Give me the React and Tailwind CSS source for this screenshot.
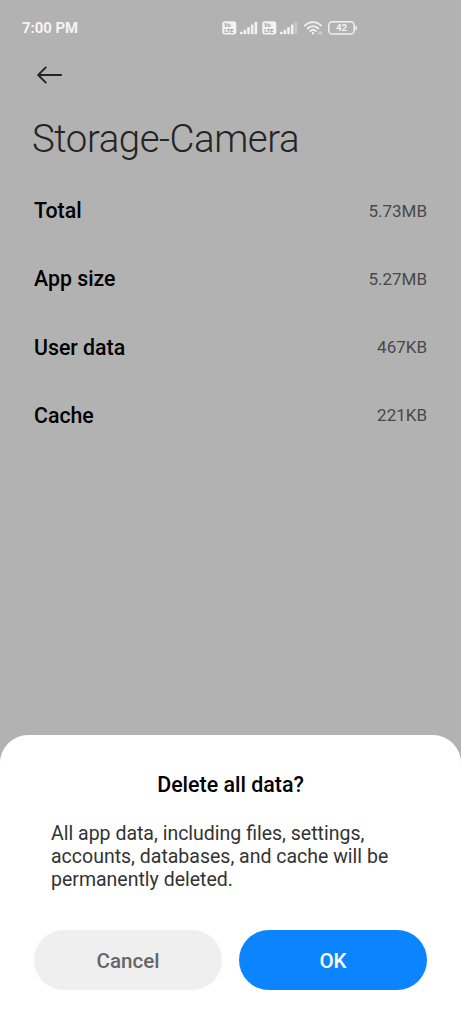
import React from 'react';

const rows = [
  { label: 'Total', value: '5.73MB' },
  { label: 'App size', value: '5.27MB' },
  { label: 'User data', value: '467KB' },
  { label: 'Cache', value: '221KB' },
];

const VolteBadge = () => (
  <svg width="15" height="14" viewBox="0 0 15 14" className="shrink-0">
    <rect x="0.3" y="0.3" width="14" height="13.2" rx="2.5" fill="#f2f2f2" />
    <text x="2" y="6" fontSize="5.6" fontWeight="700" fill="#9c9c9c">Vo</text>
    <text x="2.3" y="12.2" fontSize="5.6" fontWeight="700" fill="#9c9c9c">LTE</text>
  </svg>
);

const Signal = ({ weak }) => (
  <svg width="18" height="14" viewBox="0 0 18 14" className="shrink-0" fill="#f2f2f2">
    <rect x="0" y="10.8" width="2.6" height="2.4" rx="0.6" />
    <rect x="3.6" y="8.8" width="2.6" height="4.4" rx="0.6" />
    <rect x="7.2" y="6.2" width="2.6" height="7" rx="0.6" />
    <rect x="10.9" y="3.4" width="2.6" height="9.8" rx="0.6" />
    <rect x="14.6" y="0.7" width="2.6" height="12.5" rx="0.6" opacity={weak ? 0.35 : 1} />
  </svg>
);

const Wifi = () => (
  <svg width="19" height="14" viewBox="0 0 19 14" className="shrink-0" fill="none" stroke="#f2f2f2" strokeLinecap="round">
    <path d="M0.9 4.6C5.5 -0.1 12.5 -0.1 17.1 4.6" strokeWidth="1.8" />
    <path d="M3.6 7.5C6.7 4.4 11.3 4.4 14.4 7.5" strokeWidth="1.8" />
    <path d="M6.2 10.1C7.9 8.5 10.1 8.5 11.8 10.1" strokeWidth="1.8" />
    <circle cx="9" cy="12.2" r="1.2" fill="#f2f2f2" stroke="none" />
    <path d="M14.8 10.8V13M17 10.8V13" strokeWidth="1" opacity="0.8" />
  </svg>
);

const Battery = () => (
  <svg width="30" height="14" viewBox="0 0 30 14" className="shrink-0">
    <rect x="0.8" y="0.8" width="25.4" height="12.2" rx="3.6" fill="none" stroke="#f2f2f2" strokeWidth="1.5" />
    <path d="M28.2 5.4V8.4" stroke="#f2f2f2" strokeWidth="1.5" strokeLinecap="round" />
    <text x="13.5" y="10.4" fontSize="9.8" fontWeight="700" fill="#f2f2f2" textAnchor="middle">42</text>
  </svg>
);

const StatusBar = () => (
  <div className="flex h-[54px] items-center pl-[22px] pt-px text-[#f4f4f4]">
    <span className="w-[200px] pt-px text-[14.9px] font-bold">7:00 PM</span>
    <div className="flex items-center">
      <VolteBadge />
      <div className="ml-[3px]">
        <Signal />
      </div>
      <div className="ml-1">
        <VolteBadge />
      </div>
      <div className="ml-[3px]">
        <Signal weak />
      </div>
      <div className="ml-[6px]">
        <Wifi />
      </div>
      <div className="ml-[5px]">
        <Battery />
      </div>
    </div>
  </div>
);

const App = () => {
  return (
    <div className="flex h-screen flex-col overflow-hidden bg-[#b2b2b2] font-['Roboto',sans-serif]">
      <StatusBar />

      {/* Header */}
      <header>
        <button aria-label="Back" className="ml-[36px] mt-[11px] block">
          <svg width="28" height="20" viewBox="0 0 28 20" fill="none" stroke="#242424" strokeWidth="1.9" strokeLinecap="round" strokeLinejoin="round">
            <path d="M25.2 10H2.2M9.8 2.4L2.2 10L9.8 17.6" />
          </svg>
        </button>
        <h1 className="ml-8 mt-[31px] text-[38.4px] font-light leading-[46px] tracking-[-0.45px] text-[#242424]">Storage-Camera</h1>
      </header>

      {/* Storage details */}
      <main className="mt-[15px] flex-1 px-[34px]">
        {rows.map((row) => (
          <div key={row.label} className="flex h-[68.2px] items-center justify-between">
            <span className="text-[21.3px] font-medium text-black">{row.label}</span>
            <span className="pt-px text-[17px] text-[#484848]">{row.value}</span>
          </div>
        ))}
      </main>

      {/* Confirm sheet */}
      <section role="dialog" className="h-[289px] rounded-t-[28px] bg-white px-[34px] pt-[36px]">
        <h2 className="text-center text-[21.4px] font-medium leading-7 text-black">Delete all data?</h2>
        <p className="ml-[17px] mt-[23px] w-[350px] text-[19.5px] leading-[23px] text-[#333]">
          All app data, including files, settings, accounts, databases, and cache will be permanently deleted.
        </p>
        <div className="mt-[39px] flex gap-[17px] text-[20.6px] font-medium">
          <button className="h-[60px] flex-1 rounded-full bg-[#efefef] pt-0.5 text-[#666]">Cancel</button>
          <button className="h-[60px] flex-1 rounded-full bg-[#0d84ff] pt-0.5 text-white">OK</button>
        </div>
      </section>
    </div>
  );
};

export default App;
